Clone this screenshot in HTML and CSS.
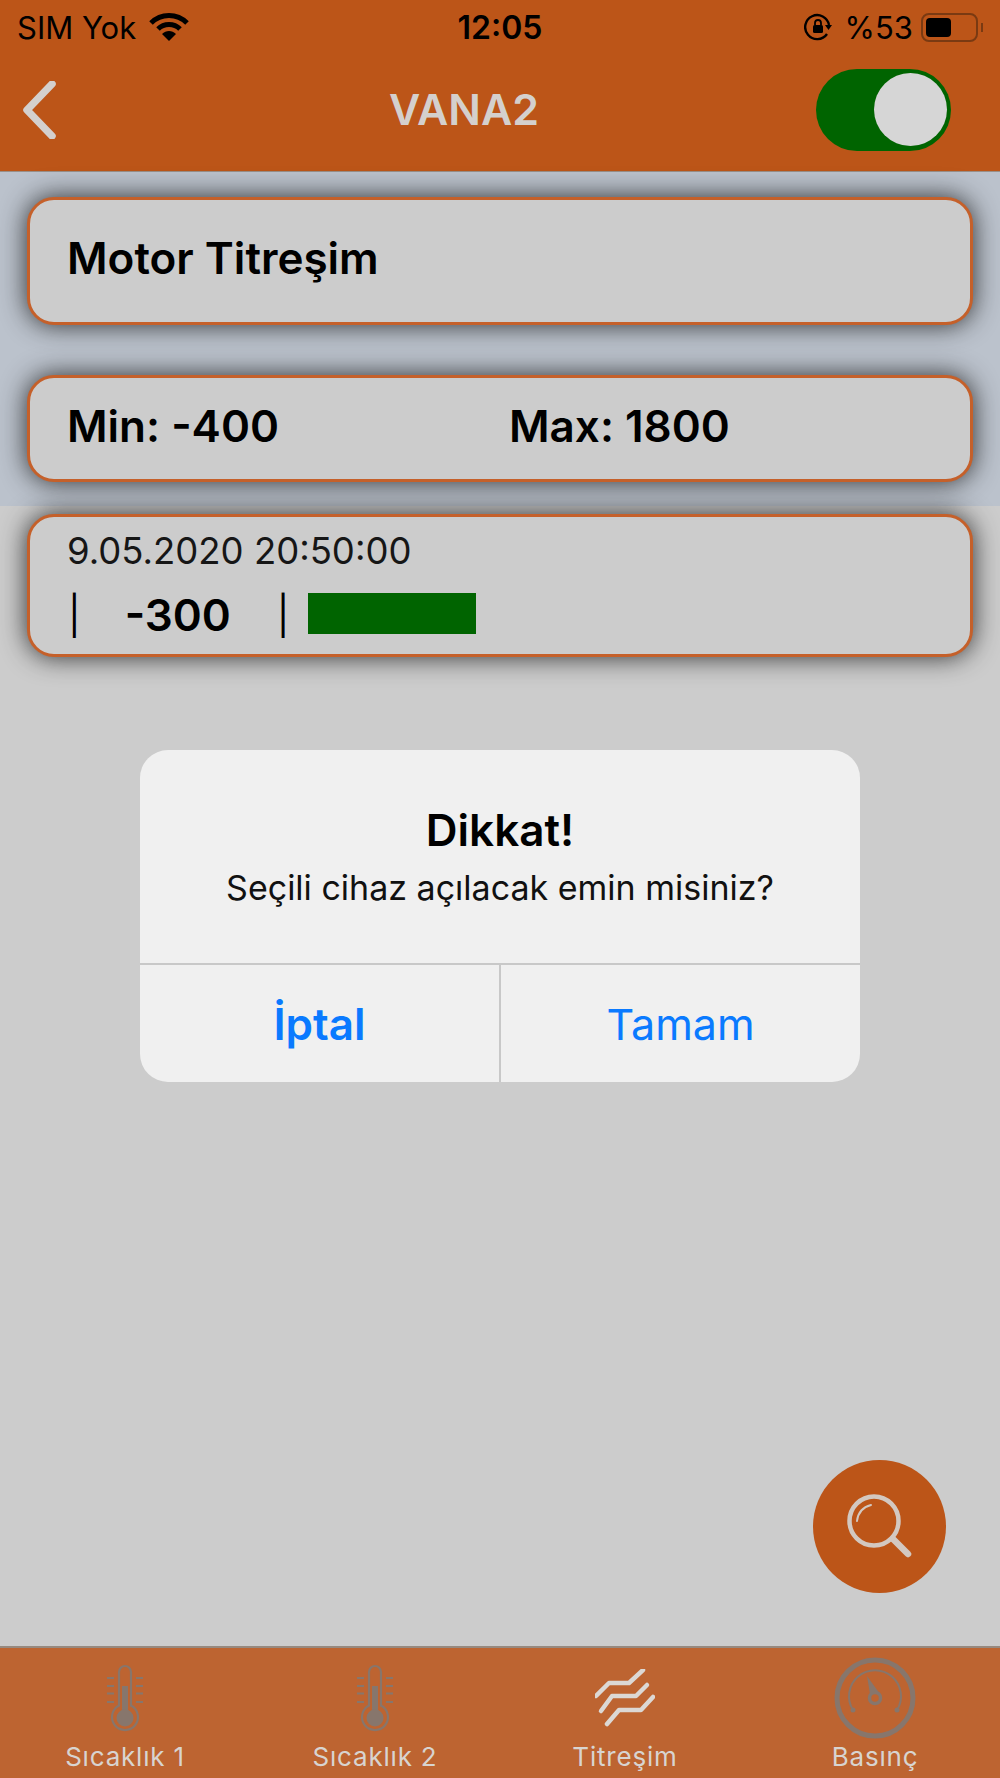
FILE: index.html
```html
<!DOCTYPE html>
<html lang="tr">
<head>
  <meta charset="UTF-8" />
  <title>VANA2</title>
  <meta name="viewport" content="width=device-width, initial-scale=1.0" />
  <link rel="stylesheet" href="styles.css">
</head>
<body>
  <div class="app">
    <header class="header">
      <div class="status-bar">
        <div class="status-left">
          <span>SIM Yok</span>
          <svg class="wifi" viewBox="0 0 40 28" width="40" height="28">
            <path d="M2 10 C12 0 28 0 38 10" fill="none" stroke="#000" stroke-width="5"/>
            <path d="M9 16 C15 10 25 10 31 16" fill="none" stroke="#000" stroke-width="5"/>
            <path d="M20 28 L13 21 C17 17 23 17 27 21 Z" fill="#000"/>
          </svg>
        </div>
        <div class="status-time">12:05</div>
        <div class="status-right">
          <svg class="rotation-lock" viewBox="0 0 28 28" width="28" height="28">
            <path d="M23 21 A12 12 0 1 1 25 12" fill="none" stroke="#000" stroke-width="2.4"/>
            <path d="M21 12 H28 L24.500 17 Z" fill="#000"/>
            <rect x="9" y="12" width="10" height="8" rx="1.500" fill="#000"/>
            <path d="M11 12 V10 A3 3 0 0 1 17 10 V12" fill="none" stroke="#000" stroke-width="1.800"/>
          </svg>
          <span class="battery-text">%53</span>
          <div class="battery"><div class="battery-fill"></div></div>
          <div class="battery-nub"></div>
        </div>
      </div>
      <nav class="nav-bar">
        <svg class="back" viewBox="0 0 34 58" width="34" height="58">
          <path d="M30 3 L5 29 L30 55" fill="none" stroke="#d4d0cd" stroke-width="7.500" stroke-linecap="round" stroke-linejoin="round"/>
        </svg>
        <div class="nav-title">VANA2</div>
        <div class="switch"><div class="switch-knob"></div></div>
      </nav>
    </header>

    <main class="content">
      <section class="top-panel">
        <div class="card card-name">Motor Titreşim</div>
        <div class="card card-range">
          <span class="range-min">Min: -400</span>
          <span>Max: 1800</span>
        </div>
      </section>

      <section class="card card-log">
        <div class="log-date">9.05.2020 20:50:00</div>
        <div class="log-row">
          <span class="log-sep">|</span>
          <span class="log-value">-300</span>
          <span class="log-sep">|</span>
          <div class="log-bar"></div>
        </div>
      </section>

      <div class="dialog">
        <div class="dialog-body">
          <div class="dialog-title">Dikkat!</div>
          <div class="dialog-text">Seçili cihaz açılacak emin misiniz?</div>
        </div>
        <div class="dialog-actions">
          <div class="dialog-btn dialog-btn-bold">İptal</div>
          <div class="dialog-btn">Tamam</div>
        </div>
      </div>

      <div class="fab">
        <svg viewBox="0 0 66 66" width="66" height="66">
          <circle cx="27" cy="27" r="24.500" fill="none" stroke="#d3c8c0" stroke-width="4.500"/>
          <path d="M46 45 L61 60" fill="none" stroke="#d3c8c0" stroke-width="6.500" stroke-linecap="round"/>
          <path d="M10 27 C11 19 16 13 24 11" fill="none" stroke="#d3c8c0" stroke-width="2" stroke-linecap="round"/>
        </svg>
      </div>
    </main>

    <footer class="tab-bar">
      <div class="tab">
        <div class="tab-icon">
          <svg viewBox="0 0 40 68" width="40" height="68">
            <path d="M14 41.500 V8 A6 6 0 0 1 26 8 V41.500 A13 13 0 1 1 14 41.500 Z" fill="none" stroke="#87766c" stroke-width="2.200"/>
            <rect x="17" y="22" width="6" height="26" fill="#87766c"/>
            <circle cx="20" cy="54" r="8.500" fill="#87766c"/>
            <path d="M2 14 H9 M2 22 H9 M2 29.500 H9 M2 38 H9 M31 14 H38 M31 22 H38 M31 29.500 H38 M31 38 H38" stroke="#87766c" stroke-width="2.200"/>
          </svg>
        </div>
        <div class="tab-label">Sıcaklık 1</div>
      </div>
      <div class="tab">
        <div class="tab-icon">
          <svg viewBox="0 0 40 68" width="40" height="68">
            <path d="M14 41.500 V8 A6 6 0 0 1 26 8 V41.500 A13 13 0 1 1 14 41.500 Z" fill="none" stroke="#87766c" stroke-width="2.200"/>
            <rect x="17" y="22" width="6" height="26" fill="#87766c"/>
            <circle cx="20" cy="54" r="8.500" fill="#87766c"/>
            <path d="M2 14 H9 M2 22 H9 M2 29.500 H9 M2 38 H9 M31 14 H38 M31 22 H38 M31 29.500 H38 M31 38 H38" stroke="#87766c" stroke-width="2.200"/>
          </svg>
        </div>
        <div class="tab-label">Sıcaklık 2</div>
      </div>
      <div class="tab">
        <div class="tab-icon">
          <svg viewBox="0 0 60 58" width="60" height="58">
            <g fill="none" stroke="#dcd8d4" stroke-width="4.500" stroke-linecap="round" stroke-linejoin="round">
              <path d="M1 27 L14 14 H34 L48 1"/>
              <path d="M6 42 L17 27 H41 L52 16"/>
              <path d="M12 55 L24 41 H46 L58 28"/>
            </g>
          </svg>
        </div>
        <div class="tab-label">Titreşim</div>
      </div>
      <div class="tab">
        <div class="tab-icon">
          <svg viewBox="0 0 84 84" width="84" height="84">
            <circle cx="42" cy="42" r="38" fill="none" stroke="#87766c" stroke-width="5"/>
            <path d="M20 54 A26 26 0 1 1 64 54" fill="none" stroke="#87766c" stroke-width="2"/>
            <circle cx="20" cy="54" r="2.500" fill="#87766c"/>
            <circle cx="64" cy="54" r="2.500" fill="#87766c"/>
            <circle cx="42" cy="42" r="5.500" fill="none" stroke="#87766c" stroke-width="3.500"/>
            <path d="M34 20 L37 38 L47 38 Z" fill="#87766c"/>
          </svg>
        </div>
        <div class="tab-label">Basınç</div>
      </div>
    </footer>
  </div>
</body>
</html>
```

FILE: styles.css
```css
* {
  margin: 0;
  padding: 0;
  box-sizing: border-box;
  font-family: 'Inter', 'Liberation Sans', sans-serif;
}

body {
  background: #cccccc;
  color: #000;
}

.app {
  display: flex;
  flex-direction: column;
  height: 1778px;
  overflow: hidden;
}

.header {
  background: #bc5518;
  height: 172px;
  border-bottom: 1px solid #9a8f88;
}

.status-bar {
  display: grid;
  grid-template-columns: 1fr auto 1fr;
  align-items: center;
  height: 54px;
  padding: 0 17px 0 17px;
  font-size: 31px;
}

.status-left {
  display: flex;
  align-items: center;
  gap: 13px;
}

.status-time {
  font-size: 32px;
  font-weight: 600;
}

.status-right {
  display: flex;
  align-items: center;
  justify-content: flex-end;
}

.battery-text {
  margin: 0 8px 0 13px;
}

.battery {
  width: 57px;
  height: 29px;
  padding: 3px;
  border: 2px solid #7a3a12;
  border-radius: 8px;
}

.battery-fill {
  width: 25px;
  height: 100%;
  background: #000;
  border-radius: 4px;
}

.battery-nub {
  width: 2px;
  height: 9px;
  margin-left: 3px;
  background: #7a3a12;
}

.nav-bar {
  display: flex;
  align-items: center;
  justify-content: space-between;
  height: 117px;
  padding: 0 49px 6px 22px;
}

.nav-title {
  margin-left: 56px;
  margin-bottom: 2px;
  color: #d4d0cd;
  font-size: 43px;
  font-weight: 600;
}

.switch {
  display: flex;
  justify-content: flex-end;
  align-items: center;
  width: 135px;
  height: 82px;
  padding-right: 4px;
  background: #006400;
  border-radius: 41px;
}

.switch-knob {
  width: 73px;
  height: 73px;
  background: #d6d6d6;
  border-radius: 50%;
}

.content {
  flex: 1;
  position: relative;
  background: #cccccc;
}

.top-panel {
  display: flex;
  flex-direction: column;
  gap: 50px;
  height: 334px;
  padding: 25px 27px 0;
  background: #bbc2cc;
}

.card {
  display: flex;
  align-items: center;
  background: #cccccc;
  border: 3px solid #c5602a;
  border-radius: 27px;
  box-shadow: 0 0 26px rgba(20, 20, 20, 0.85);
  padding-left: 37px;
}

.card-name {
  height: 128px;
  padding-bottom: 6px;
  font-size: 44px;
  font-weight: 600;
}

.card-range {
  height: 107px;
  padding-bottom: 5px;
  font-size: 44px;
  font-weight: 600;
}

.range-min {
  width: 442px;
}

.card-log {
  flex-direction: column;
  align-items: flex-start;
  height: 143px;
  margin: 8px 27px 0;
  padding-top: 12px;
}

.log-date {
  font-size: 36.5px;
  color: #161616;
}

.log-row {
  display: flex;
  align-items: center;
  height: 44px;
  margin-top: 20px;
  font-size: 44px;
  font-weight: 600;
}

.log-sep {
  font-weight: 400;
  font-size: 38px;
  margin-left: 1px;
}

.log-value {
  width: 195px;
  padding-left: 44px;
}

.log-bar {
  width: 168px;
  height: 41px;
  margin-left: 19px;
  margin-top: -3px;
  background: #006400;
}

.dialog {
  position: absolute;
  top: 578px;
  left: 140px;
  width: 720px;
  height: 332px;
  background: #f0f0f0;
  border-radius: 28px;
  overflow: hidden;
}

.dialog-body {
  height: 215px;
  padding-top: 53px;
  text-align: center;
  border-bottom: 2px solid #c8c8c8;
}

.dialog-title {
  font-size: 44px;
  font-weight: 600;
}

.dialog-text {
  margin-top: 10px;
  font-size: 34px;
  color: #111;
}

.dialog-actions {
  display: flex;
  height: 117px;
}

.dialog-btn {
  flex: 1;
  display: flex;
  align-items: center;
  justify-content: center;
  color: #0a7aff;
  font-size: 43px;
}

.dialog-btn-bold {
  font-size: 44px;
  font-weight: 600;
  border-right: 2px solid #c8c8c8;
}

.fab {
  position: absolute;
  right: 54px;
  bottom: 53px;
  display: flex;
  align-items: center;
  justify-content: center;
  width: 133px;
  height: 133px;
  background: #bc5518;
  border-radius: 50%;
}

.tab-bar {
  display: flex;
  height: 132px;
  background: #bd6431;
  border-top: 2px solid #96897f;
}

.tab {
  flex: 1;
  display: flex;
  flex-direction: column;
  align-items: center;
}

.tab-icon {
  display: flex;
  align-items: center;
  justify-content: center;
  height: 84px;
  margin-top: 8px;
}

.tab-label {
  margin-top: 1px;
  color: #d8d4d0;
  font-size: 26px;
  letter-spacing: 0.8px;
}
```
